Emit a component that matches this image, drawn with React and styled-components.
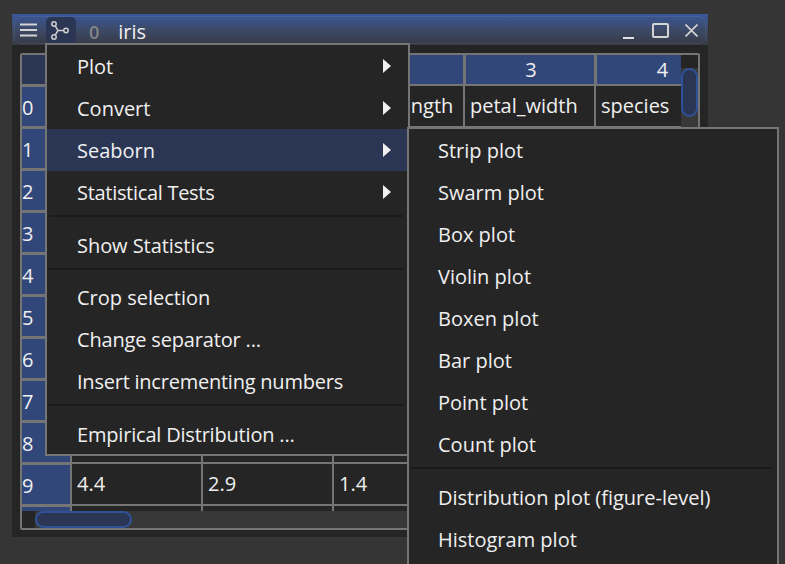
import styled, { createGlobalStyle } from "styled-components";

const GlobalStyle = createGlobalStyle`
  html, body {
    margin: 0;
    padding: 0;
    background: #353535;
  }
  * {
    box-sizing: border-box;
  }
`;

const Page = styled.div`
  position: relative;
  width: 785px;
  height: 564px;
  overflow: hidden;
  padding: 14px 0 0 12px;
  background: #353535;
  color: #f0f0f0;
  font-family: "Open Sans", "Noto Sans", sans-serif;
  font-size: 20px;
`;

const Window = styled.div`
  width: 696px;
  height: 523px;
  background: #252525;
`;

const TitleBar = styled.div`
  height: 31px;
  padding: 2px 2px 1px;
  background: linear-gradient(#3a5799, #3d4a68 50%, #363a44);
`;

const TitleInner = styled.div`
  display: flex;
  align-items: center;
  height: 100%;
  padding-left: 1px;
  border: 1px solid rgba(255, 255, 255, 0.07);
  border-radius: 7px;
`;

const IconButton = styled.div`
  display: flex;
  align-items: center;
  justify-content: center;
  width: ${(p) => p.$w || 28}px;
  height: 27px;
  margin-right: 2px;
  border-radius: 5px;
  background: ${(p) => (p.$active ? "#2a3653" : "transparent")};
`;

const TabIndex = styled.span`
  margin: 3px 0 0 11px;
  color: #858585;
  font-size: 18px;
  font-weight: 600;
`;

const TabName = styled.span`
  margin: 3px 0 0 19px;
  font-size: 20px;
  line-height: 27px;
`;

const WindowControls = styled.div`
  display: flex;
  align-items: center;
  gap: 16px;
  margin-left: auto;
  padding: 1px 7px 0 0;
`;

const Body = styled.div`
  padding: 8px 8px 0;
`;

const Frame = styled.div`
  display: flex;
  flex-direction: column;
  height: 477px;
  border: 2px solid #757575;
  border-radius: 2px;
`;

const TableRow = styled.div`
  display: flex;
  flex: 1;
  min-height: 0;
`;

const TableClip = styled.div`
  width: 660px;
  height: 100%;
  overflow: hidden;
`;

const Grid = styled.div`
  display: grid;
  grid-template-columns: 50px repeat(4, 131px) 88px;
  grid-template-rows: 31px;
  grid-auto-rows: 42px;
  background: #252525;
`;

const Corner = styled.div`
  background: #2a3653;
  border-right: 2px solid #757575;
  border-bottom: 2px solid #757575;
`;

const HeaderCell = styled.div`
  display: flex;
  align-items: center;
  justify-content: center;
  padding-left: ${(p) => p.$shift}px;
  background: #31477a;
  border-right: 2px solid #757575;
  border-bottom: 2px solid #757575;
  border-left: 1px solid #757575;
`;

const RowHead = styled.div`
  display: flex;
  align-items: center;
  padding-top: 2px;
  background: #31477a;
  border-top: 1px solid #757575;
  border-right: 2px solid #757575;
  border-bottom: 2px solid #757575;
`;

const Cell = styled.div`
  display: flex;
  align-items: center;
  padding: 0 0 2px 5px;
  border-right: 2px solid #757575;
  border-bottom: 2px solid #757575;
  white-space: nowrap;
  overflow: hidden;
`;

const VScroll = styled.div`
  flex: 1;
  padding-top: 13px;
  background: linear-gradient(#252525 13px, #383838 13px);
`;

const ScrollThumb = styled.div`
  width: ${(p) => p.$w}px;
  height: ${(p) => p.$h}px;
  margin-left: ${(p) => p.$left || 0}px;
  background: #2a3653;
  border: 2px solid #2f5196;
  border-radius: 9px;
`;

const HScroll = styled.div`
  height: 17px;
  background: linear-gradient(90deg, #252525 13px, #383838 13px);
`;

const Menu = styled.div`
  position: absolute;
  left: ${(p) => p.$left}px;
  top: ${(p) => p.$top}px;
  width: ${(p) => p.$w}px;
  background: #252525;
  border: 2px solid #757575;
`;

const Item = styled.div`
  position: relative;
  display: flex;
  align-items: center;
  height: ${(p) => p.$h || 42}px;
  padding: ${(p) => (p.$h ? 1 : 0)}px 0 0 ${(p) => p.$indent || 30}px;
  letter-spacing: ${(p) => p.$tight || 0}px;
  white-space: nowrap;
  background: ${(p) => (p.$active ? "#2a3653" : "transparent")};
`;

const Arrow = styled.span`
  position: absolute;
  right: 17px;
  top: 14px;
  border-left: 8px solid #f0f0f0;
  border-top: 7px solid transparent;
  border-bottom: 7px solid transparent;
`;

const Separator = styled.div`
  height: 2px;
  margin: 2px 5px ${(p) => p.$after || 7}px 2px;
  background: #1a1a1a;
`;

const rows = [
  ["sepal_length", "sepal_width", "petal_length", "petal_width", "species"],
  ["5.1", "3.5", "1.4", "0.2", "setosa"],
  ["4.9", "3.0", "1.4", "0.2", "setosa"],
  ["4.7", "3.2", "1.3", "0.2", "setosa"],
  ["4.6", "3.1", "1.5", "0.2", "setosa"],
  ["5.0", "3.6", "1.4", "0.2", "setosa"],
  ["5.4", "3.9", "1.7", "0.4", "setosa"],
  ["4.6", "3.4", "1.4", "0.3", "setosa"],
  ["5.0", "3.4", "1.5", "0.2", "setosa"],
  ["4.4", "2.9", "1.4", "0.2", "setosa"],
  ["4.9", "3.1", "1.5", "0.1", "setosa"],
];

const seabornItems = [
  "Strip plot",
  "Swarm plot",
  "Box plot",
  "Violin plot",
  "Boxen plot",
  "Bar plot",
  "Point plot",
  "Count plot",
];

const Hamburger = () => (
  <svg width="18" height="14" viewBox="0 0 18 14" stroke="#d4d4d4" strokeWidth="2" style={{ marginLeft: -2 }}>
    <path d="M0 1.5h17M0 7h17M0 12.5h17" />
  </svg>
);

const TreeIcon = () => (
  <svg width="20" height="22" viewBox="0 0 20 22" fill="none" stroke="#cfcfcf" strokeWidth="1.5">
    <circle cx="3" cy="5" r="2.2" />
    <circle cx="3" cy="18" r="2.2" />
    <circle cx="15" cy="11.5" r="2.2" />
    <path d="M4.2 6.9L7 11.5L4.2 16.1M7 11.5H12.8" />
  </svg>
);

const App = () => {
  return (
    <Page>
      <GlobalStyle />
      <Window>
        <TitleBar>
          <TitleInner>
            <IconButton>
              <Hamburger />
            </IconButton>
            <IconButton $w={30} $active>
              <TreeIcon />
            </IconButton>
            <TabIndex>0</TabIndex>
            <TabName>iris</TabName>
            <WindowControls>
              <svg width="13" height="16" viewBox="0 0 13 16" stroke="#e0e0e0" strokeWidth="2">
                <path d="M0 15h11" />
              </svg>
              <svg width="17" height="15" viewBox="0 0 17 15" fill="none" stroke="#d4d4d4" strokeWidth="2">
                <rect x="1" y="1" width="15" height="13" rx="1" />
              </svg>
              <svg width="13" height="13" viewBox="0 0 13 13" stroke="#d4d4d4" strokeWidth="1.6">
                <path d="M0.5 0.5l12 12M12.5 0.5l-12 12" />
              </svg>
            </WindowControls>
          </TitleInner>
        </TitleBar>
        <Body>
          <Frame>
            <TableRow>
              <TableClip>
                <Grid>
                  <Corner />
                  {[0, 1, 2, 3, 4].map((n) => (
                    <HeaderCell key={n} $shift={n === 4 ? 46 : 2}>
                      {n}
                    </HeaderCell>
                  ))}
                  {rows.map((row, i) => [
                    <RowHead key={"h" + i}>{i}</RowHead>,
                    ...row.map((value, j) => <Cell key={i + "-" + j}>{value}</Cell>),
                  ])}
                </Grid>
              </TableClip>
              <VScroll>
                <ScrollThumb $w={17} $h={49} />
              </VScroll>
            </TableRow>
            <HScroll>
              <ScrollThumb $w={97} $h={17} $left={13} />
            </HScroll>
          </Frame>
        </Body>
      </Window>

      <Menu $left={45} $top={43} $w={365}>
        <Item>
          Plot
          <Arrow />
        </Item>
        <Item>
          Convert
          <Arrow />
        </Item>
        <Item $active>
          Seaborn
          <Arrow />
        </Item>
        <Item $tight={-0.3}>
          Statistical Tests
          <Arrow />
        </Item>
        <Separator />
        <Item $tight={-0.05}>Show Statistics</Item>
        <Separator $after={6} />
        <Item>Crop selection</Item>
        <Item $tight={-0.17}>Change separator ...</Item>
        <Item $tight={-0.23}>Insert incrementing numbers</Item>
        <Separator />
        <Item $h={41} $tight={-0.19}>
          Empirical Distribution ...
        </Item>
      </Menu>

      <Menu $left={407} $top={127} $w={372}>
        {seabornItems.map((name) => (
          <Item key={name} $indent={29}>
            {name}
          </Item>
        ))}
        <Separator />
        <Item $indent={29}>Distribution plot (figure-level)</Item>
        <Item $indent={29}>Histogram plot</Item>
        <Item $indent={29}>KDE plot</Item>
      </Menu>
    </Page>
  );
};

export default App;
